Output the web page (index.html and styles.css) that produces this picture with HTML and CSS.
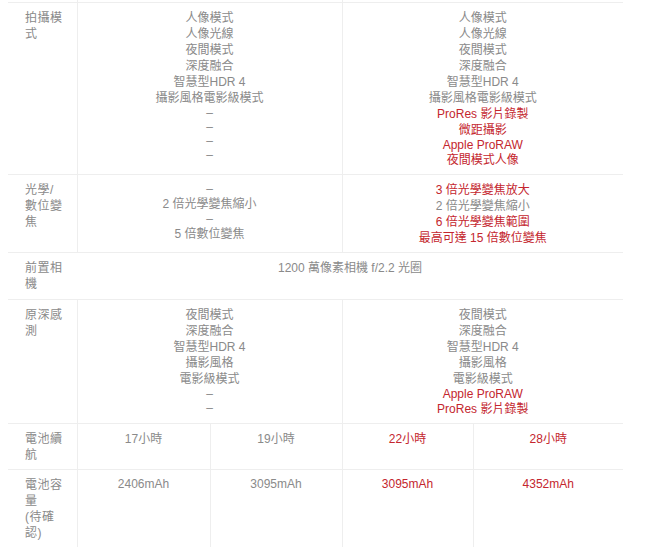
FILE: index.html
```html
<!DOCTYPE html>
<html lang="zh-Hant">
<head>
<meta charset="utf-8">
<title>規格比較</title>
<link rel="stylesheet" href="styles.css">
</head>
<body>
<table class="spec">
  <colgroup>
    <col class="c-label">
    <col class="c-a">
    <col class="c-b">
    <col class="c-c">
    <col class="c-d">
  </colgroup>
  <tbody>
    <tr class="cut">
      <td></td><td colspan="2"></td><td colspan="2"></td>
    </tr>
    <tr>
      <th><div class="ln">拍攝模</div><div class="ln">式</div></th>
      <td colspan="2">
        <div class="ln">人像模式</div>
        <div class="ln">人像光線</div>
        <div class="ln">夜間模式</div>
        <div class="ln">深度融合</div>
        <div class="ln">智慧型HDR 4</div>
        <div class="ln">攝影風格電影級模式</div>
        <div class="ln lat">–</div>
        <div class="ln lat">–</div>
        <div class="ln lat">–</div>
        <div class="ln lat">–</div>
      </td>
      <td colspan="2">
        <div class="ln">人像模式</div>
        <div class="ln">人像光線</div>
        <div class="ln">夜間模式</div>
        <div class="ln">深度融合</div>
        <div class="ln">智慧型HDR 4</div>
        <div class="ln">攝影風格電影級模式</div>
        <div class="ln hl">ProRes 影片錄製</div>
        <div class="ln hl">微距攝影</div>
        <div class="ln lat hl">Apple ProRAW</div>
        <div class="ln hl">夜間模式人像</div>
      </td>
    </tr>
    <tr>
      <th><div class="ln">光學/</div><div class="ln">數位變</div><div class="ln">焦</div></th>
      <td colspan="2">
        <div class="ln lat">–</div>
        <div class="ln">2 倍光學變焦縮小</div>
        <div class="ln lat">–</div>
        <div class="ln">5 倍數位變焦</div>
      </td>
      <td colspan="2">
        <div class="ln hl">3 倍光學變焦放大</div>
        <div class="ln">2 倍光學變焦縮小</div>
        <div class="ln hl">6 倍光學變焦範圍</div>
        <div class="ln hl">最高可達 15 倍數位變焦</div>
      </td>
    </tr>
    <tr class="plain">
      <th><div class="ln">前置相</div><div class="ln">機</div></th>
      <td colspan="4"><div class="ln">1200 萬像素相機 f/2.2 光圈</div></td>
    </tr>
    <tr>
      <th><div class="ln">原深感</div><div class="ln">測</div></th>
      <td colspan="2">
        <div class="ln">夜間模式</div>
        <div class="ln">深度融合</div>
        <div class="ln">智慧型HDR 4</div>
        <div class="ln">攝影風格</div>
        <div class="ln">電影級模式</div>
        <div class="ln lat">–</div>
        <div class="ln lat">–</div>
      </td>
      <td colspan="2">
        <div class="ln">夜間模式</div>
        <div class="ln">深度融合</div>
        <div class="ln">智慧型HDR 4</div>
        <div class="ln">攝影風格</div>
        <div class="ln">電影級模式</div>
        <div class="ln lat hl">Apple ProRAW</div>
        <div class="ln hl">ProRes 影片錄製</div>
      </td>
    </tr>
    <tr>
      <th><div class="ln">電池續</div><div class="ln">航</div></th>
      <td><div class="ln">17小時</div></td>
      <td><div class="ln">19小時</div></td>
      <td class="hl"><div class="ln">22小時</div></td>
      <td class="hl"><div class="ln">28小時</div></td>
    </tr>
    <tr>
      <th><div class="ln">電池容</div><div class="ln">量</div><div class="ln">(待確</div><div class="ln">認)</div></th>
      <td><div class="ln lat">2406mAh</div></td>
      <td><div class="ln lat">3095mAh</div></td>
      <td class="hl"><div class="ln lat">3095mAh</div></td>
      <td class="hl"><div class="ln lat">4352mAh</div></td>
    </tr>
  </tbody>
</table>
</body>
</html>
```
FILE: styles.css
```css
html, body {
  margin: 0;
  padding: 0;
  background: #ffffff;
}

body {
  padding: 0 8px;
  font-family: "Liberation Sans", "Noto Sans CJK TC", Arial, sans-serif;
  font-size: 12px;
  line-height: 16px;
  color: #8a8a8a;
}

.spec {
  width: 615px;
  border-collapse: collapse;
  table-layout: fixed;
}

.c-label { width: 69px; }
.c-a { width: 133px; }
.c-b { width: 132px; }
.c-c { width: 131px; }
.c-d { width: 150px; }

.spec th,
.spec td {
  border-bottom: 1px solid #eeeeee;
  border-left: 1px solid #eeeeee;
  vertical-align: top;
  padding: 7px 8px 6px;
  font-weight: normal;
  text-align: center;
}

.spec th {
  text-align: left;
  padding-left: 17px;
  border-left: none;
  letter-spacing: 0.5px;
}

.ln {
  line-height: 16px;
  white-space: nowrap;
}

.ln.lat {
  line-height: 14px;
}

.spec .cut td {
  height: 2px;
  padding: 0;
  border-left: 1px solid #eeeeee;
}

.spec .cut td:first-child {
  border-left: none;
}

.spec .plain td {
  border-left: none;
}

.spec .plain th,
.spec .plain td {
  padding-bottom: 7px;
}

.hl {
  color: #c4262e;
}
```
